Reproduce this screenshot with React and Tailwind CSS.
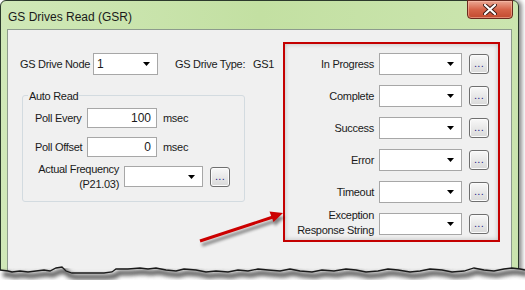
import React from 'react';

const font = { fontFamily: '"Liberation Sans", Arial, sans-serif' };

const Arrow = () => (
  <svg width="7" height="4" viewBox="0 0 7 4" className="block">
    <path d="M0 0 L7 0 L3.5 4 Z" fill="#000" />
  </svg>
);

const Combo = ({ value, w = 'w-[83px]', h = 'h-[22px]' }) => (
  <div className={`${w} ${h} shrink-0 flex items-center justify-between border border-[#a7a7a7] bg-white pl-[3px] pr-[7px] text-[12px]`}>
    <span>{value}</span>
    <Arrow />
  </div>
);

const Dots = () => (
  <div className="w-[20px] h-[20px] shrink-0 rounded-[3px] border border-[#6f6f6f] bg-gradient-to-b from-[#f8f8f8] to-[#d9d9d9] flex items-end justify-center pb-[4px] shadow-[inset_0_0_0_1px_#fcfcfc]">
    <span className="text-[11px] leading-none text-[#26268a] tracking-[0.3px]">...</span>
  </div>
);

const Field = ({ value }) => (
  <div className="w-[70px] h-[20px] shrink-0 border border-[#a7a7a7] bg-white flex items-center justify-end pr-[5px] text-[12px]">
    {value}
  </div>
);

const Label = ({ className = '', children }) => (
  <span className={`shrink-0 whitespace-nowrap tracking-[-0.3px] ${className}`}>{children}</span>
);

const statusRows = ['In Progress', 'Complete', 'Success', 'Error', 'Timeout'];

const TornEdge = () => {
  const pts = [
    [0, 270], [8, 271], [12, 272], [20, 271], [28, 272], [36, 271], [44, 270], [50, 271], [56, 268],
    [62, 267], [66, 271], [72, 273], [90, 273], [104, 273], [112, 272], [116, 269], [128, 269],
    [140, 268], [148, 269], [156, 268], [166, 270], [176, 271], [184, 269], [196, 270], [206, 272],
    [216, 271], [228, 272], [238, 270], [248, 271], [258, 269], [268, 270], [280, 271], [290, 269],
    [300, 271], [312, 272], [322, 270], [334, 271], [346, 269], [356, 270], [366, 272], [378, 271],
    [388, 269], [398, 270], [410, 272], [420, 271], [430, 269], [442, 270], [452, 272], [464, 271],
    [474, 268], [484, 270], [494, 271], [504, 269], [512, 268], [520, 269], [525, 270],
  ];
  const line = pts.map(([x, y]) => `${x},${y}`).join(' ');
  const shadow = pts.map(([x, y]) => `${x + 3},${y + 4}`).join(' ');
  return (
    <svg className="absolute left-0 top-0 pointer-events-none" width="525" height="290">
      <defs>
        <filter id="blur" x="-10%" y="-50%" width="120%" height="200%">
          <feGaussianBlur stdDeviation="2" />
        </filter>
      </defs>
      <polygon points={`${line} 525,290 0,290`} fill="#fff" />
      <polyline points={shadow} fill="none" stroke="#555" strokeWidth="5" filter="url(#blur)" />
      <polyline points={line} fill="none" stroke="#1a1a1a" strokeWidth="1.3" />
    </svg>
  );
};

const RedArrow = () => (
  <svg className="absolute left-0 top-0 pointer-events-none" width="525" height="290">
    <defs>
      <filter id="ash" x="-20%" y="-50%" width="140%" height="200%">
        <feGaussianBlur stdDeviation="1.5" />
      </filter>
    </defs>
    <g transform="translate(2,4)" opacity="0.45" filter="url(#ash)">
      <line x1="200" y1="241" x2="273" y2="217" stroke="#000" strokeWidth="3" />
      <polygon points="283,213 273,222 270,212" fill="#000" />
    </g>
    <line x1="200" y1="241" x2="273" y2="217" stroke="#cc0000" strokeWidth="3" />
    <polygon points="283,213 273.5,222 269.5,211.5" fill="#cc0000" />
  </svg>
);

export default function App() {
  return (
    <div className="relative w-[525px] h-[290px] bg-white overflow-hidden text-[#1a1a1a]" style={font}>
      <div className="flex flex-col w-[519px] h-[278px] border border-[#2c3a2c] rounded-t-[6px] bg-gradient-to-r from-[#d0e8b8] via-[#c3e0a2] to-[#cbe5af] shadow-[3px_0_4px_rgba(0,0,0,0.45)]">
        <div className="relative h-[28px] flex items-center pl-[7px] pt-[3px]">
          <span className="text-[12px]">GS Drives Read (GSR)</span>
          <div className="absolute right-[5px] top-[-1px] w-[46px] h-[19px] rounded-b-[4px] border border-[#6a2a1e] bg-gradient-to-b from-[#eaa793] via-[#d66449] to-[#c24a2f] flex items-center justify-center shadow-[inset_0_0_0_1px_rgba(255,200,180,0.5)]">
            <svg width="14" height="11" viewBox="0 0 14 11">
              <path d="M2 1 L12 10 M12 1 L2 10" stroke="#3a1a14" strokeWidth="4" strokeLinecap="round" />
              <path d="M2 1 L12 10 M12 1 L2 10" stroke="#fff" strokeWidth="2.2" strokeLinecap="round" />
            </svg>
          </div>
        </div>
        <div className="flex-1 mx-[6px] border border-[#8d9b8d] bg-[#f0f0f0] flex text-[11px]">
          <div className="w-[275px] shrink-0 pl-[12px] pt-[23px]">
            <div className="flex items-center h-[22px]">
              <Label className="w-[73px]">GS Drive Node</Label>
              <Combo value="1" w="w-[65px]" />
              <Label className="ml-[17px] w-[78px]">GS Drive Type:</Label>
              <Label>GS1</Label>
            </div>
            <div className="relative mt-[20px] ml-[2px] w-[223px] h-[107px] border border-[#d3dbe0] rounded-[3px] pt-[12px] pl-[12px]">
              <Label className="absolute top-[-8px] left-[5px] bg-[#f0f0f0] px-[1px]">Auto Read</Label>
              <div className="flex items-center">
                <Label className="w-[52px]">Poll Every</Label>
                <Field value="100" />
                <Label className="ml-[6px]">msec</Label>
              </div>
              <div className="flex items-center mt-[9px]">
                <Label className="w-[52px]">Poll Offset</Label>
                <Field value="0" />
                <Label className="ml-[6px]">msec</Label>
              </div>
              <div className="flex items-center h-[21px] mt-[9px]">
                <Label className="w-[84px] text-right leading-[15px]">
                  Actual Frequency
                  <br />
                  (P21.03)
                </Label>
                <div className="ml-[5px]">
                  <Combo w="w-[79px]" h="h-[21px]" />
                </div>
                <div className="ml-[7px]">
                  <Dots />
                </div>
              </div>
            </div>
          </div>
          <div className="mt-[12px] w-[217px] h-[200px] shrink-0 border-2 border-[#c40000] shadow-[inset_0_0_5px_rgba(0,0,0,0.22)] pt-[9px] flex flex-col gap-[10px]">
            {statusRows.map((label) => (
              <div key={label} className="flex items-center h-[22px]">
                <Label className="w-[89px] text-right">{label}</Label>
                <div className="ml-[5px]">
                  <Combo />
                </div>
                <div className="ml-[7px]">
                  <Dots />
                </div>
              </div>
            ))}
            <div className="flex items-center h-[22px]">
              <Label className="w-[89px] text-right leading-[15px] mt-[-2px]">
                Exception
                <br />
                Response String
              </Label>
              <div className="ml-[5px]">
                <Combo />
              </div>
              <div className="ml-[7px]">
                <Dots />
              </div>
            </div>
          </div>
        </div>
      </div>
      <RedArrow />
      <TornEdge />
    </div>
  );
}
